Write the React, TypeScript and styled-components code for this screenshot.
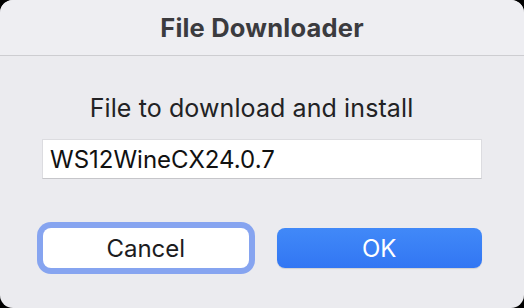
import React from "react";
import styled, { createGlobalStyle } from "styled-components";

const Global = createGlobalStyle`
  html, body { margin: 0; padding: 0; background: #000; }
  body { width: 524px; height: 308px; overflow: hidden; }
`;

const Window = styled.div`
  width: 524px;
  height: 308px;
  box-sizing: border-box;
  border-radius: 13px;
  overflow: hidden;
  background: #ebebef;
  display: flex;
  flex-direction: column;
  font-family: Inter, "Liberation Sans", sans-serif;
`;

const TitleBar = styled.div`
  height: 56px;
  flex: none;
  box-sizing: border-box;
  background: #eeeef2;
  border-bottom: 1px solid #cdcdd1;
  display: flex;
  align-items: center;
  justify-content: center;
  padding-bottom: 1px;
`;

const Title = styled.div`
  font-size: 25.5px;
  font-weight: 700;
  color: #3b3b3f;
  letter-spacing: 0.2px;
`;

const Body = styled.div`
  flex: 1;
  display: flex;
  flex-direction: column;
  padding: 0 42px 0 42px;
`;

const Label = styled.div`
  margin-top: 37px;
  text-align: center;
  padding-right: 21px;
  font-size: 25px;
  line-height: 30px;
  color: #222224;
  letter-spacing: 0.1px;
`;

const Field = styled.div`
  margin-top: 16px;
  height: 40px;
  box-sizing: border-box;
  background: #fff;
  border: 1px solid #dcdce0;
  border-bottom-color: #c6c6ca;
  display: flex;
  align-items: center;
  padding: 0 7px;
  font-size: 24px;
  color: #111;
`;

const Buttons = styled.div`
  margin-top: 49px;
  display: flex;
  gap: 28px;
  padding-left: 1px;
`;

const Button = styled.div<{ $primary?: boolean }>`
  flex: 1;
  height: 40px;
  border-radius: 8px;
  display: flex;
  align-items: center;
  justify-content: center;
  font-size: 24px;
  box-sizing: border-box;
  color: ${(p) => (p.$primary ? "#fff" : "#1c1c1e")};
  background: ${(p) =>
    p.$primary ? "linear-gradient(#4189f8, #3276f3)" : "#fff"};
  box-shadow: ${(p) =>
    p.$primary
      ? "0 1px 1px rgba(0,0,0,0.12)"
      : "0 0 0 6px rgba(100,140,240,0.75)"};
`;

export default function App() {
  return (
    <>
      <Global />
      <Window>
        <TitleBar>
          <Title>File Downloader</Title>
        </TitleBar>
        <Body>
          <Label>File to download and install</Label>
          <Field>WS12WineCX24.0.7</Field>
          <Buttons>
            <Button>Cancel</Button>
            <Button $primary>OK</Button>
          </Buttons>
        </Body>
      </Window>
    </>
  );
}
